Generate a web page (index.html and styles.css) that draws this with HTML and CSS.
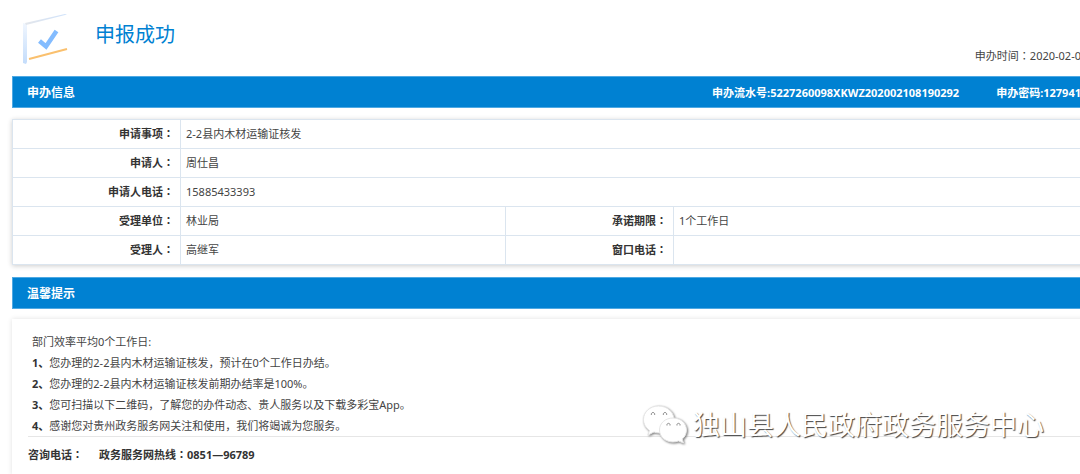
FILE: index.html
```
<!DOCTYPE html>
<html lang="zh-CN">
<head>
<meta charset="utf-8">
<meta name="viewport" content="width=device-width, initial-scale=1">
<title>申报成功</title>
<link rel="stylesheet" href="styles.css">
</head>
<body>
<main class="page">
  <header class="result">
    <svg class="result-icon" viewBox="0 0 48 54" aria-hidden="true">
      <defs>
        <linearGradient id="edge" x1="0" y1="0" x2="0" y2="1"><stop offset="0" stop-color="#f0f6fe"/><stop offset="1" stop-color="#c3dcfb"/></linearGradient>
        <linearGradient id="roof" x1="0" y1="0" x2="1" y2="0"><stop offset="0" stop-color="#e3e6eb"/><stop offset="1" stop-color="#cfe2fb"/></linearGradient>
      </defs>
      <path d="M1 11 5 12V50L4 52 1 51Z" fill="url(#edge)"/>
      <path d="M3 11 43 2 45 2.500 4 13Z" fill="url(#roof)"/>
      <path d="M7 47 45 37" stroke="#fac06e" stroke-width="2" fill="none"/>
      <path d="M17.500 29 24 34.500 34.500 19" stroke="#83bcff" stroke-width="4.500" fill="none"/>
    </svg>
    <h1 class="result-title">申报成功</h1>
    <p class="result-time">申办时间<span class="colon" lang="zh-TW">：</span>2020-02-0</p>
  </header>

  <section class="section">
    <div class="bar">
      <h2 class="bar-title">申办信息</h2>
      <div class="bar-meta">
        <span>申办流水号:5227260098XKWZ202002108190292</span>
        <span>申办密码:127941</span>
      </div>
    </div>
    <table class="info">
      <colgroup><col class="col-label"><col class="col-value"><col class="col-label"><col></colgroup>
      <tbody>
        <tr><th scope="row">申请事项<span class="colon" lang="zh-TW">：</span></th><td colspan="3">2-2县内木材运输证核发</td></tr>
        <tr><th scope="row">申请人<span class="colon" lang="zh-TW">：</span></th><td colspan="3">周仕昌</td></tr>
        <tr><th scope="row">申请人电话<span class="colon" lang="zh-TW">：</span></th><td colspan="3">15885433393</td></tr>
        <tr><th scope="row">受理单位<span class="colon" lang="zh-TW">：</span></th><td>林业局</td><th scope="row">承诺期限<span class="colon" lang="zh-TW">：</span></th><td>1个工作日</td></tr>
        <tr><th scope="row">受理人<span class="colon" lang="zh-TW">：</span></th><td>高继军</td><th scope="row">窗口电话<span class="colon" lang="zh-TW">：</span></th><td></td></tr>
      </tbody>
    </table>
  </section>

  <section class="section">
    <div class="bar">
      <h2 class="bar-title">温馨提示</h2>
    </div>
    <div class="tips">
      <div class="tips-list">
        <p>部门效率平均0个工作日:</p>
        <p><b>1、</b>您办理的2-2县内木材运输证核发，预计在0个工作日办结。</p>
        <p><b>2、</b>您办理的2-2县内木材运输证核发前期办结率是100%。</p>
        <p><b>3、</b>您可扫描以下二维码，了解您的办件动态、贵人服务以及下载多彩宝App。</p>
        <p><b>4、</b>感谢您对贵州政务服务网关注和使用，我们将竭诚为您服务。</p>
      </div>
      <div class="contact">
        <span>咨询电话<span class="colon" lang="zh-TW">：</span></span>
        <span>政务服务网热线<span class="colon" lang="zh-TW">：</span>0851—96789</span>
      </div>
    </div>
  </section>
</main>

<div class="watermark">
  <svg class="watermark-icon" viewBox="0 0 46 40" aria-hidden="true">
    <g fill="#fff" stroke-linejoin="round">
      <path class="bubble" d="M16.500 1C8 1 1.500 7 1.500 14.500c0 4.500 2.300 8.300 6 11L6 30l6-3c6 2 12 1 16-3 3-3 4-6 4-9.500C32 7 25 1 16.500 1Z"/>
      <path class="bubble" d="M31 13C23.500 13 17.500 18 17.500 25s6 12 13.500 12c2 0 3.800-.4 5.500-1l5 2-1.300-4C43 32 44.500 28.500 44.500 25c0-7-6-12-13.500-12Z"/>
    </g>
    <g fill="none" stroke="#888" stroke-width="1">
      <path d="M9.500 10a1.700 1.700 0 1 1 3 0M21.500 10a1.700 1.700 0 1 1 3 0M25 20.500a1.600 1.600 0 1 1 3 0M35 20.500a1.600 1.600 0 1 1 3 0"/>
    </g>
  </svg>
  <span>独山县人民政府政务服务中心</span>
</div>
</body>
</html>
```
FILE: styles.css
```
* {
  box-sizing: border-box;
}

body {
  position: relative;
  margin: 0;
  overflow: hidden;
  background: #fff;
  color: #444;
  font: 11px/21px "Noto Sans", "Noto Sans CJK SC", sans-serif;
}

h1, h2, p {
  margin: 0;
}

/* The sheet runs slightly past the right edge of the window. */
.page {
  margin-right: -28px;
  padding: 12px 12px 0;
}

.result {
  display: flex;
  align-items: flex-start;
  height: 64px;
  padding: 0 15px 0 10px;
}

.result-icon {
  width: 48px;
  height: 54px;
}

.result-title {
  margin-left: 25px;
  color: #0081d2;
  font-size: 20px;
  font-weight: 400;
  line-height: 46px;
}

.result-time {
  align-self: flex-end;
  margin-left: auto;
  padding-bottom: 10px;
  white-space: nowrap;
}

/* Centres the full-width colon in its box. */
.colon {
  font-family: "Noto Sans CJK TC", sans-serif;
  line-height: 1;
}

.section {
  margin-bottom: 12px;
}

.bar {
  display: flex;
  align-items: center;
  justify-content: space-between;
  height: 32px;
  padding: 0 15px 0 14px;
  border: 1px solid #4fa9e3;
  border-right: 0;
  background: #0081d2;
  color: #fff;
  font-weight: 700;
}

.bar-title {
  font-size: 12px;
}

.bar-meta {
  display: flex;
  gap: 37px;
  white-space: nowrap;
}

.info {
  width: 100%;
  margin-top: 11px;
  border-collapse: collapse;
  table-layout: fixed;
  box-shadow: 0 1px 5px rgba(0, 0, 0, 0.2);
}

.col-label {
  width: 168px;
}

.col-value {
  width: 30%;
}

.info th,
.info td {
  height: 29px;
  padding: 0 5px;
  border: 1px solid #dbe5ef;
  line-height: 20px;
}

.info th {
  padding-right: 6px;
  color: #333;
  text-align: right;
}

.info td {
  text-align: left;
}

.tips {
  margin-top: 10px;
  padding: 12px 16px 0;
  box-shadow: 0 0 5px rgba(0, 0, 0, 0.12);
}

.tips-list {
  padding-left: 4px;
  border-bottom: 1px solid #e6e6e6;
}

.tips-list b {
  color: #333;
}

.contact {
  display: flex;
  gap: 16px;
  padding: 7px 0 10px;
  color: #333;
  font-weight: 700;
}

.watermark {
  position: absolute;
  top: 404px;
  right: 36px;
  display: flex;
  align-items: center;
  gap: 5px;
  color: #fff;
  font-size: 27px;
  line-height: 42px;
  text-shadow: 1px 1px 1px #444;
  white-space: nowrap;
}

.watermark-icon {
  width: 46px;
  height: 40px;
  filter: drop-shadow(1px 1px 1px #777);
}

.bubble {
  stroke: #e6e6e6;
  stroke-width: 1px;
}
```
